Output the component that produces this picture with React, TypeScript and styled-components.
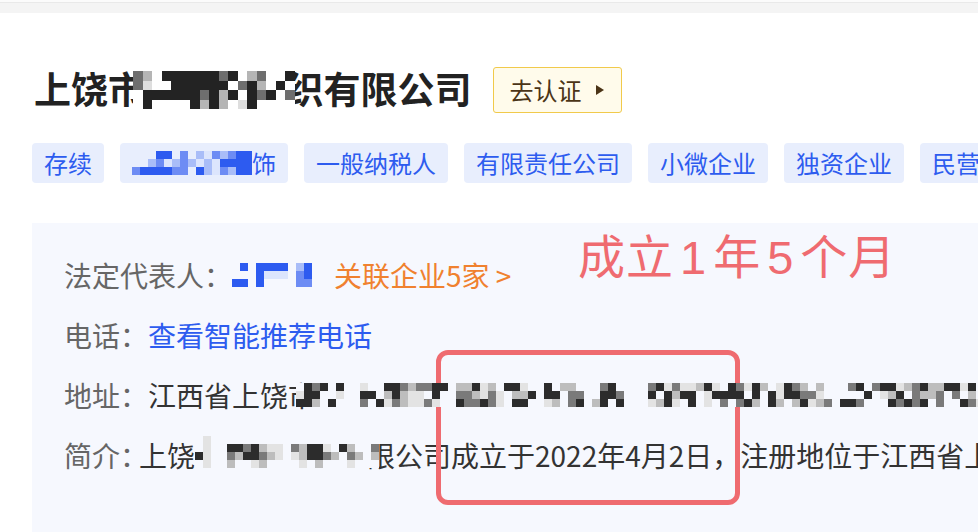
import React from 'react';
import styled, { createGlobalStyle } from 'styled-components';

const GlobalStyle = createGlobalStyle`
  html, body {
    margin: 0;
    padding: 0;
    background: #ffffff;
  }
  body {
    width: 978px;
    height: 532px;
    overflow: hidden;
    font-family: "Noto Sans CJK SC", "Noto Sans", sans-serif;
  }
`;

/* ---------- mosaic (pixelated redaction) ---------- */

const GRAY: Record<string, string> = { a: '#e3e3e3', b: '#bdbdbd', c: '#7a7a7a', d: '#2c2c2c' };
const TITLE_GRAY: Record<string, string> = { a: '#dedede', b: '#b5b5b5', c: '#6e6e6e', d: '#232323' };
const BLUE: Record<string, string> = { a: '#dce5fd', b: '#a9bdf8', c: '#6d8cf4', d: '#2d5bf0' };

const MosaicSvg = styled.svg<{ $bg: string }>`
  flex: none;
  display: block;
  position: relative;
  z-index: 1;
  background: ${(p) => p.$bg};
`;

type MosaicProps = {
  rows: string[];
  cell: number;
  palette: Record<string, string>;
  bg: string;
  className?: string;
};

const Mosaic: React.FC<MosaicProps> = ({ rows, cell, palette, bg, className }) => {
  const cols = Math.max(...rows.map((r) => r.length));
  const w = cols * cell;
  const h = rows.length * cell;
  return (
    <MosaicSvg
      className={className}
      $bg={bg}
      width={w}
      height={h}
      viewBox={`0 0 ${w} ${h}`}
      shapeRendering="crispEdges"
    >
      {rows.flatMap((r, y) =>
        r.split('').map((ch, x) =>
          palette[ch] ? (
            <rect key={`${x}-${y}`} x={x * cell} y={y * cell} width={cell} height={cell} fill={palette[ch]} />
          ) : null
        )
      )}
    </MosaicSvg>
  );
};

function makeRng(seed: number) {
  let s = seed >>> 0;
  return () => {
    s = (Math.imul(s, 1664525) + 1013904223) >>> 0;
    return s / 4294967296;
  };
}

function buildRows(cols: number, rowCount: number, segs: [number, number][], seed: number): string[] {
  const r = makeRng(seed);
  const out: string[] = [];
  for (let y = 0; y < rowCount; y++) {
    let line = '';
    for (let x = 0; x < cols; x++) {
      const inSeg = segs.some(([a, b]) => x >= a && x <= b);
      if (!inSeg) {
        line += '.';
        continue;
      }
      const v = r();
      line += v < 0.24 ? '.' : v < 0.38 ? 'a' : v < 0.52 ? 'b' : v < 0.7 ? 'c' : 'd';
    }
    out.push(line);
  }
  return out;
}

const TITLE_ROWS = [
  'cb.ddddddcd.bc..d',
  'ca..dddddd.cdb.d',
  '.ddddddcdbd.dcd.c',
  '.d....dbdb.ad...',
];

const TAG_ROWS = ['...dd.c.bacbcdd', '..bcabcbabadddd', 'cddddcc.dbacbdd'];

const PERSON_ROWS = ['.d.dddd.bd', '...daaa.cd', 'dd.d....cc'];

const ADDRESS_ROWS = buildRows(
  86,
  3,
  [
    [0, 5],
    [8, 9],
    [10, 12],
    [13, 18],
    [20, 26],
    [27, 29],
    [31, 35],
    [37, 40],
    [44, 66],
    [68, 75],
    [76, 79],
    [80, 82],
    [83, 85],
  ],
  7
);

const INTRO_ROWS = [
  '.a.....................',
  '.a..ddcdbaa.cbdda.db..c',
  'da..cbddcba.abddcb.cb.b',
  '.a..b..ab....a.b...a...',
];

/* ---------- layout ---------- */

const Page = styled.div`
  width: 978px;
  height: 532px;
  overflow: hidden;
  display: flex;
  flex-direction: column;
  background: #ffffff;
`;

const TopBar = styled.div`
  flex: none;
  height: 13px;
  background: linear-gradient(#fbfbfb 0 2px, #e9e9e9 2px 3px, #f4f4f4 3px);
`;

const Content = styled.main`
  flex: 1;
  min-height: 0;
  display: flex;
  flex-direction: column;
  padding: 54px 0 0 32px;
`;

const TitleRow = styled.div`
  flex: none;
  display: flex;
  align-items: center;
  gap: 21px;
  height: 46px;
`;

const Title = styled.h1`
  margin: 0;
  padding: 0 0 5px 2px;
  display: flex;
  align-items: center;
  font-size: 37px;
  font-weight: 700;
  line-height: 46px;
  color: #222222;
  white-space: nowrap;
`;

const TitleMosaic = styled(Mosaic)`
  margin: 5px -8px 0 -12px;
`;

const CertButton = styled.button`
  flex: none;
  display: inline-flex;
  align-items: center;
  gap: 14px;
  box-sizing: border-box;
  height: 46px;
  padding: 0 17px 0 16px;
  border: 1px solid #f1ca4b;
  border-radius: 3px;
  background: #fffbeb;
  color: #4b3416;
  font-family: "Noto Sans CJK SC", sans-serif;
  font-size: 24px;
  line-height: 1;
`;

const Caret = styled.span`
  width: 0;
  height: 0;
  border-left: 8px solid #4b3416;
  border-top: 5.5px solid transparent;
  border-bottom: 5.5px solid transparent;
`;

const TagRow = styled.div`
  flex: none;
  display: flex;
  gap: 16px;
  margin-top: 30px;
  overflow: hidden;
`;

const Tag = styled.span`
  flex: none;
  display: inline-flex;
  align-items: center;
  height: 40px;
  padding: 0 12px;
  border-radius: 4px;
  background: #e8eefd;
  color: #2d5cef;
  font-size: 24px;
  line-height: 40px;
  white-space: nowrap;
`;

const Panel = styled.section`
  position: relative;
  flex: 1;
  min-height: 0;
  margin-top: 40px;
  padding: 22px 0 0 32px;
  background: #f6f8fe;
  overflow: hidden;
`;

const InfoRow = styled.div`
  display: flex;
  align-items: center;
  height: 60px;
  font-size: 28px;
  color: #333333;
  white-space: nowrap;
`;

const Label = styled.span<{ $w?: number }>`
  flex: none;
  color: #666666;
  ${(p) => (p.$w ? `width: ${p.$w}px; overflow: hidden;` : '')}
`;

const Value = styled.span`
  flex: none;
  color: #333333;
`;

const LinkText = styled.span<{ $tone: 'blue' | 'orange' }>`
  flex: none;
  color: ${(p) => (p.$tone === 'blue' ? '#2d5cef' : '#f0812f')};
`;

const PersonMosaic = styled(Mosaic)`
  margin-right: 22px;
`;

const AddressMosaic = styled(Mosaic)`
  margin-left: -20px;
`;

const IntroMosaic = styled(Mosaic)`
  margin: -6px -12px 0 0;
`;

const Annotation = styled.div`
  position: absolute;
  left: 546px;
  top: 7px;
  font-size: 47px;
  line-height: 1;
  letter-spacing: 1px;
  color: #ef6b70;
  white-space: nowrap;
`;

const AnnotationNum = styled.span`
  padding: 0 6px;
  font-family: "Liberation Sans", "Noto Sans", sans-serif;
  font-weight: 400;
`;

const Highlight = styled.div`
  position: absolute;
  left: 404px;
  top: 127px;
  width: 304px;
  height: 155px;
  box-sizing: border-box;
  border: 5px solid #ef6b70;
  border-radius: 12px;
  pointer-events: none;
`;

export default function App() {
  return (
    <>
      <GlobalStyle />
      <Page>
        <TopBar />
        <Content>
          <TitleRow>
            <Title>
              上饶市
              <TitleMosaic rows={TITLE_ROWS} cell={9.5} palette={TITLE_GRAY} bg="#ffffff" />
              织有限公司
            </Title>
            <CertButton>
              去认证
              <Caret />
            </CertButton>
          </TitleRow>

          <TagRow>
            <Tag>存续</Tag>
            <Tag>
              <Mosaic rows={TAG_ROWS} cell={8} palette={BLUE} bg="#e8eefd" />
              饰
            </Tag>
            <Tag>一般纳税人</Tag>
            <Tag>有限责任公司</Tag>
            <Tag>小微企业</Tag>
            <Tag>独资企业</Tag>
            <Tag>民营企业</Tag>
          </TagRow>

          <Panel>
            <InfoRow>
              <Label>法定代表人：</Label>
              <PersonMosaic rows={PERSON_ROWS} cell={8} palette={BLUE} bg="#f6f8fe" />
              <LinkText $tone="orange">关联企业5家 &gt;</LinkText>
            </InfoRow>
            <InfoRow>
              <Label>电话：</Label>
              <LinkText $tone="blue">查看智能推荐电话</LinkText>
            </InfoRow>
            <InfoRow>
              <Label>地址：</Label>
              <Value>江西省上饶市</Value>
              <AddressMosaic rows={ADDRESS_ROWS} cell={8} palette={GRAY} bg="#f6f8fe" />
            </InfoRow>
            <InfoRow>
              <Label $w={75}>简介：</Label>
              <Value>上饶</Value>
              <IntroMosaic rows={INTRO_ROWS} cell={8} palette={GRAY} bg="#f6f8fe" />
              <Value>限公司成立于2022年4月2日，注册地位于江西省上饶市</Value>
            </InfoRow>

            <Annotation>
              成立<AnnotationNum>1</AnnotationNum>年<AnnotationNum>5</AnnotationNum>个月
            </Annotation>
            <Highlight />
          </Panel>
        </Content>
      </Page>
    </>
  );
}
